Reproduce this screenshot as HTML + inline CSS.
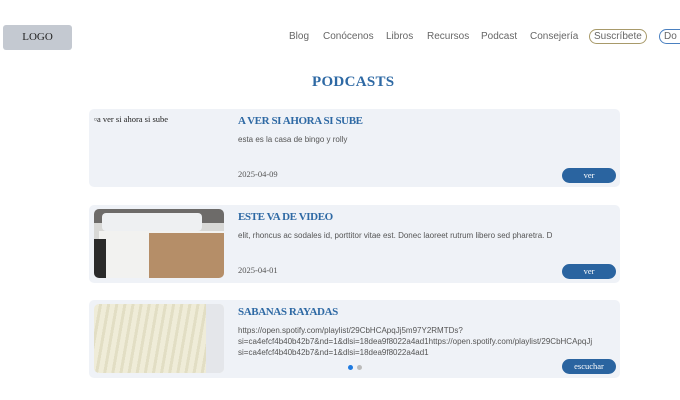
<!DOCTYPE html>
<html><head><meta charset="utf-8"><style>
*{margin:0;padding:0;box-sizing:border-box}
body{width:680px;height:400px;overflow:hidden;background:#fff;position:relative;font-family:"Liberation Sans",sans-serif}
.a{position:absolute}
.logo{left:3px;top:25px;width:69px;height:25px;background:#c4c9d1;border-radius:3px;font:11px "Liberation Serif",serif;color:#222;text-align:center;line-height:25px}
.nav{top:31px;font-size:10px;color:#666}
.pill{top:29px;height:15px;border-radius:8px;font-size:10px;color:#666;line-height:13px;padding:0 4px}
h1{position:absolute;left:312px;top:74px;font:bold 15px "Liberation Serif",serif;color:#2e69a4;letter-spacing:0.3px}
.card{position:absolute;left:89px;width:531px;height:78px;background:#eff2f7;border-radius:5px}
.img{position:absolute;left:5px;top:4px;width:130px;height:69px;border-radius:5px;overflow:hidden}
.t{position:absolute;left:149px;top:6px;font:bold 11px "Liberation Serif",serif;color:#2e69a4;letter-spacing:-0.4px}
.d{position:absolute;left:149px;font-size:8px;color:#555;line-height:11px}
.dt{position:absolute;left:149px;font:8.5px "Liberation Serif",serif;color:#555}
.b{position:absolute;left:473px;width:54px;height:15px;border-radius:8px;background:#2a64a0;color:#fff;font:8.5px "Liberation Serif",serif;text-align:center;line-height:15px}
</style></head><body>
<div class="a logo">LOGO</div>
<div class="a nav" style="left:289px">Blog</div>
<div class="a nav" style="left:323px">Conócenos</div>
<div class="a nav" style="left:386px">Libros</div>
<div class="a nav" style="left:427px">Recursos</div>
<div class="a nav" style="left:481px">Podcast</div>
<div class="a nav" style="left:530px">Consejería</div>
<div class="a pill" style="left:589px;border:1px solid #a89a6a">Suscríbete</div>
<div class="a pill" style="left:659px;width:30px;border:1px solid #4a80c0">Do</div>
<h1>PODCASTS</h1>

<div class="card" style="top:109px">
<div class="a" style="left:5px;top:5px;font:8.5px 'Liberation Serif',serif;color:#222">▫a ver si ahora si sube</div>
<div class="t">A VER SI AHORA SI SUBE</div>
<div class="d" style="top:25px">esta es la casa de bingo y rolly</div>
<div class="dt" style="top:60px">2025-04-09</div>
<div class="b" style="top:59px">ver</div>
</div>

<div class="card" style="top:205px">
<div class="img" style="background:#d8d8d6">
<div class="a" style="left:0;top:0;width:130px;height:14px;background:#6d6b69"></div>
<div class="a" style="left:8px;top:4px;width:100px;height:18px;background:#eef0f2;border-radius:4px"></div>
<div class="a" style="left:5px;top:22px;width:125px;height:47px;background:#f2f2f0"></div>
<div class="a" style="left:55px;top:24px;width:75px;height:45px;background:#b58e68"></div>
<div class="a" style="left:0;top:30px;width:12px;height:39px;background:#2a2a2a"></div>
</div>
<div class="t">ESTE VA DE VIDEO</div>
<div class="d" style="top:25px">elit, rhoncus ac sodales id, porttitor vitae est. Donec laoreet rutrum libero sed pharetra. D</div>
<div class="dt" style="top:60px">2025-04-01</div>
<div class="b" style="top:59px">ver</div>
</div>

<div class="card" style="top:300px">
<div class="img" style="background:repeating-linear-gradient(100deg,#efecd8 0 5px,#e2dec4 5px 8px)">
<div class="a" style="left:112px;top:0;width:18px;height:69px;background:#e4e6ea"></div>
</div>
<div class="t">SABANAS RAYADAS</div>
<div class="d" style="top:25px">https://open.spotify.com/playlist/29CbHCApqJj5m97Y2RMTDs?<br>si=ca4efcf4b40b42b7&amp;nd=1&amp;dlsi=18dea9f8022a4ad1https://open.spotify.com/playlist/29CbHCApqJj<br>si=ca4efcf4b40b42b7&amp;nd=1&amp;dlsi=18dea9f8022a4ad1</div>
<div class="a" style="left:259px;top:65px;width:5px;height:5px;border-radius:50%;background:#1f7ae0"></div>
<div class="a" style="left:268px;top:65px;width:5px;height:5px;border-radius:50%;background:#bbb"></div>
<div class="b" style="top:59px">escuchar</div>
</div>
</body></html>
